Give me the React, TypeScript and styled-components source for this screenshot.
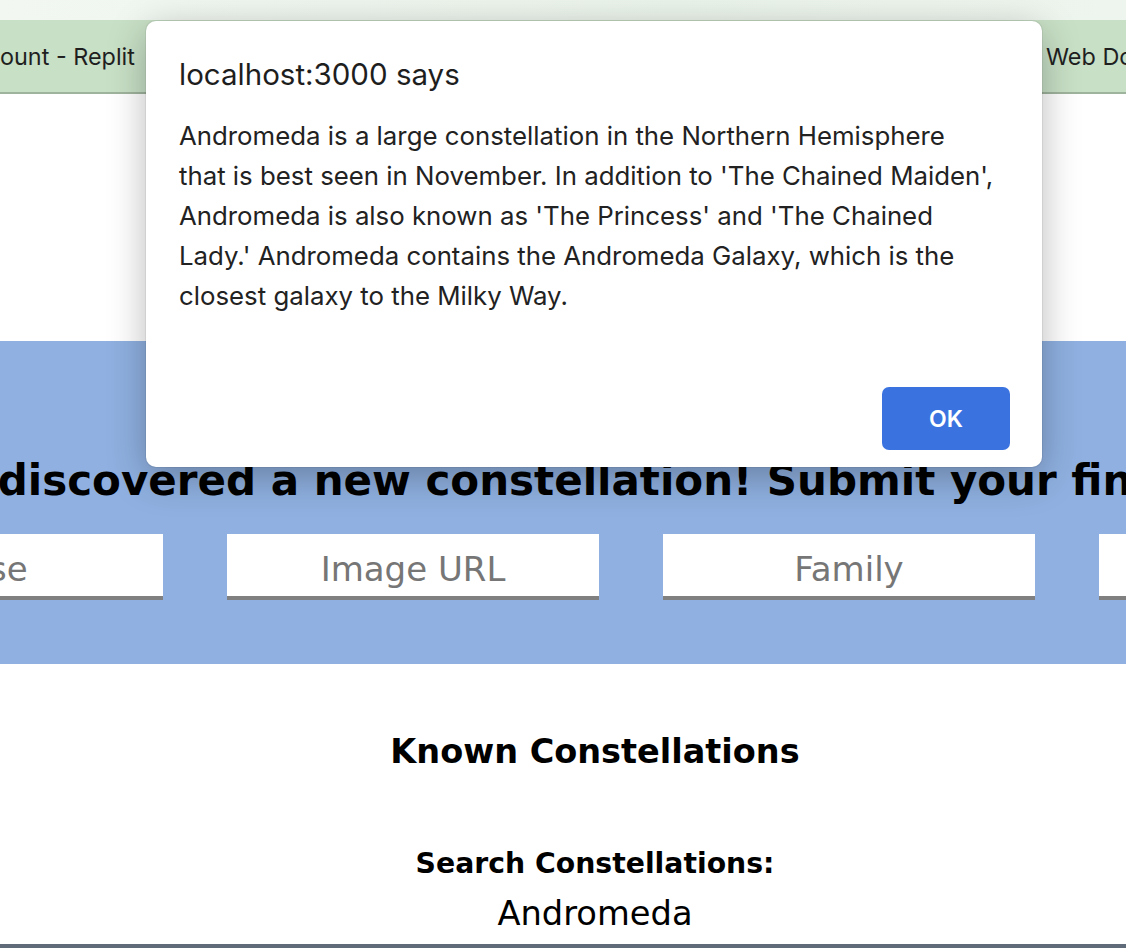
import React from "react";
import styled, { createGlobalStyle } from "styled-components";

const GlobalStyle = createGlobalStyle`
  html, body {
    margin: 0;
    padding: 0;
    background: #ffffff;
    overflow: hidden;
  }
  body {
    width: 1126px;
    height: 948px;
    font-family: "DejaVu Sans", Verdana, sans-serif;
  }
  * { box-sizing: border-box; }
`;

const Screen = styled.div`
  position: relative;
  width: 1126px;
  height: 948px;
  overflow: hidden;
  display: flex;
  flex-direction: column;
`;

const TopStrip = styled.div`
  height: 20px;
  background: linear-gradient(90deg, #f2f7f2 0%, #eaf3ea 60%, #eef5ee 100%);
`;

const BookmarkBar = styled.div`
  height: 74px;
  background: #c8e0c6;
  border-bottom: 2px solid #9fb49d;
  display: flex;
  align-items: center;
  justify-content: space-between;
  overflow: hidden;
  font-family: Inter, "Liberation Sans", sans-serif;
  font-size: 23.4px;
  color: #1f1f1f;
  white-space: nowrap;
`;

const BookmarkLabel = styled.span<{ $clip?: boolean }>`
  display: block;
  width: ${(p) => (p.$clip ? "80px" : "auto")};
  overflow: hidden;
`;

const Blank = styled.div`
  height: 247px;
  background: #ffffff;
`;

const Band = styled.section`
  height: 323px;
  background: #8fb0e0;
  padding-top: 116px;
  display: flex;
  flex-direction: column;
  gap: 29px;
`;

const BandHeading = styled.h1`
  margin: 0 0 0 -237px;
  font-family: "DejaVu Sans", Verdana, sans-serif;
  font-weight: 700;
  font-size: 42px;
  line-height: 48px;
  color: #000;
  white-space: nowrap;
`;

const FieldRow = styled.div`
  display: flex;
  gap: 64px;
  margin-left: -209px;
`;

const Field = styled.input`
  flex: 0 0 372px;
  width: 372px;
  height: 66px;
  padding: 8px 0 0;
  border: none;
  border-bottom: 4px solid #808080;
  background: #ffffff;
  text-align: center;
  font-family: "DejaVu Sans", Verdana, sans-serif;
  font-size: 34px;
  color: #000;
  outline: none;
  &::placeholder {
    color: #767676;
  }
`;

const Listing = styled.section`
  flex: 1;
  display: flex;
  flex-direction: column;
  align-items: center;
  padding-left: 64px;
  padding-top: 68px;
`;

const ListingTitle = styled.h2`
  margin: 0;
  font-family: "DejaVu Sans", Verdana, sans-serif;
  font-weight: 700;
  font-size: 33.5px;
  line-height: 40px;
  color: #000;
`;

const SearchLabel = styled.label`
  margin-top: 75px;
  font-family: "DejaVu Sans", Verdana, sans-serif;
  font-weight: 700;
  font-size: 28.3px;
  line-height: 34px;
  color: #000;
`;

const SearchValue = styled.div`
  margin-top: 13px;
  font-family: "DejaVu Sans", Verdana, sans-serif;
  font-size: 33.7px;
  line-height: 40px;
  color: #000;
`;

const SearchRule = styled.div`
  height: 4px;
  background: #5f6b78;
`;

const Dialog = styled.div`
  position: absolute;
  left: 146px;
  top: 21px;
  width: 896px;
  height: 446px;
  background: #ffffff;
  border-radius: 10px;
  box-shadow: 0 10px 38px rgba(0, 0, 0, 0.28), 0 0 0 1px rgba(0, 0, 0, 0.06);
  padding: 35px 32px 17px 33px;
  display: flex;
  flex-direction: column;
  font-family: Inter, "Liberation Sans", sans-serif;
  color: #222222;
`;

const DialogTitle = styled.div`
  font-size: 29.5px;
  line-height: 36px;
  color: #1e1e1e;
`;

const DialogBody = styled.div`
  margin-top: 24px;
  font-size: 25.8px;
  line-height: 40px;
`;

const DialogActions = styled.div`
  margin-top: auto;
  display: flex;
  justify-content: flex-end;
`;

const OkButton = styled.button`
  width: 128px;
  height: 63px;
  border: none;
  border-radius: 7px;
  background: #3a73e0;
  color: #ffffff;
  font-family: Inter, "Liberation Sans", sans-serif;
  font-weight: 600;
  font-size: 23px;
  cursor: pointer;
`;

const fields = ["Phase", "Image URL", "Family", "Quadrant"];

const bodyLines = [
  "Andromeda is a large constellation in the Northern Hemisphere",
  "that is best seen in November. In addition to 'The Chained Maiden',",
  "Andromeda is also known as 'The Princess' and 'The Chained",
  "Lady.' Andromeda contains the Andromeda Galaxy, which is the",
  "closest galaxy to the Milky Way.",
];

export default function App() {
  return (
    <>
      <GlobalStyle />
      <Screen>
        <TopStrip />
        <BookmarkBar>
          <BookmarkLabel>ount - Replit</BookmarkLabel>
          <BookmarkLabel $clip>Web Docs</BookmarkLabel>
        </BookmarkBar>
        <Blank />
        <Band>
          <BandHeading>Have you discovered a new constellation! Submit your findings!</BandHeading>
          <FieldRow>
            {fields.map((f) => (
              <Field key={f} placeholder={f} />
            ))}
          </FieldRow>
        </Band>
        <Listing>
          <ListingTitle>Known Constellations</ListingTitle>
          <SearchLabel>Search Constellations:</SearchLabel>
          <SearchValue>Andromeda</SearchValue>
        </Listing>
        <SearchRule />
        <Dialog role="alertdialog">
          <DialogTitle>localhost:3000 says</DialogTitle>
          <DialogBody>
            {bodyLines.map((l, i) => (
              <React.Fragment key={i}>
                {l}
                {i < bodyLines.length - 1 && <br />}
              </React.Fragment>
            ))}
          </DialogBody>
          <DialogActions>
            <OkButton>OK</OkButton>
          </DialogActions>
        </Dialog>
      </Screen>
    </>
  );
}
